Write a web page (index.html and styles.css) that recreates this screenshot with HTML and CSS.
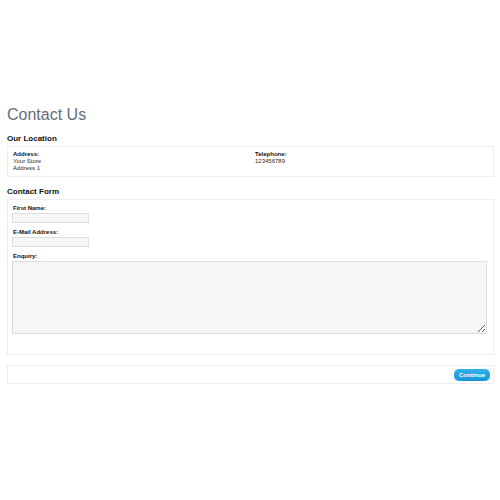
FILE: index.html
```html
<!DOCTYPE html>
<html>
<head>
<meta charset="utf-8">
<link rel="stylesheet" href="styles.css">
</head>
<body>
<div class="page">
  <h1 class="title">Contact Us</h1>
  <h2 class="section">Our Location</h2>
  <div class="box location">
    <div class="col">
      <b>Address:</b><br>Your Store<br>Address 1
    </div>
    <div class="col">
      <b>Telephone:</b><br>123456789
    </div>
  </div>
  <h2 class="section">Contact Form</h2>
  <div class="box form">
    <div class="label"><b>First Name:</b></div>
    <input class="field" type="text">
    <div class="label gap"><b>E-Mail Address:</b></div>
    <input class="field" type="text">
    <div class="label gap"><b>Enquiry:</b></div>
    <textarea class="area"></textarea>
  </div>
  <div class="box buttons">
    <button class="btn" type="button">Continue</button>
  </div>
</div>
</body>
</html>
```
FILE: styles.css
```css
html, body {
  margin: 0;
  padding: 0;
  background: #fff;
}
body {
  font-family: "Liberation Sans", Arial, sans-serif;
  font-size: 6px;
  line-height: 7px;
  color: #2a2a2a;
}
.page {
  padding: 106px 6px 0 7px;
}
.title {
  margin: 0;
  font-size: 16px;
  line-height: 18px;
  font-weight: normal;
  color: #636e75;
}
.section {
  margin: 10px 0 2px 0;
  font-size: 8px;
  line-height: 10px;
  font-weight: bold;
  color: #111;
}
.box {
  border: 1px solid #eee;
}
.location {
  display: grid;
  grid-template-columns: 242px 1fr;
  padding: 4px 5px;
}
.location b, .label b {
  color: #111;
}
.form {
  padding: 5px 5px 20px 4px;
  display: flex;
  flex-direction: column;
  align-items: flex-start;
}
.label {
  padding-left: 1px;
  margin-bottom: 1px;
}
.label.gap {
  margin-top: 6px;
}
.field {
  box-sizing: border-box;
  width: 77px;
  height: 10px;
  margin: 0;
  padding: 0;
  border: 1px solid #ddd;
  background: #f6f6f6;
}
.area {
  box-sizing: border-box;
  width: 475px;
  height: 73px;
  margin: 0;
  padding: 0;
  border: 1px solid #ddd;
  background: #f6f6f6;
}
.buttons {
  margin-top: 10px;
  padding: 3px 3px 2px 3px;
  display: flex;
  justify-content: flex-end;
}
.btn {
  height: 12px;
  padding: 0 5px;
  border: none;
  border-radius: 5px;
  background: linear-gradient(#33b0ea, #1696d6);
  color: #fff;
  font-family: "Liberation Sans", Arial, sans-serif;
  font-weight: bold;
  font-size: 6px;
  line-height: 12px;
}
```
